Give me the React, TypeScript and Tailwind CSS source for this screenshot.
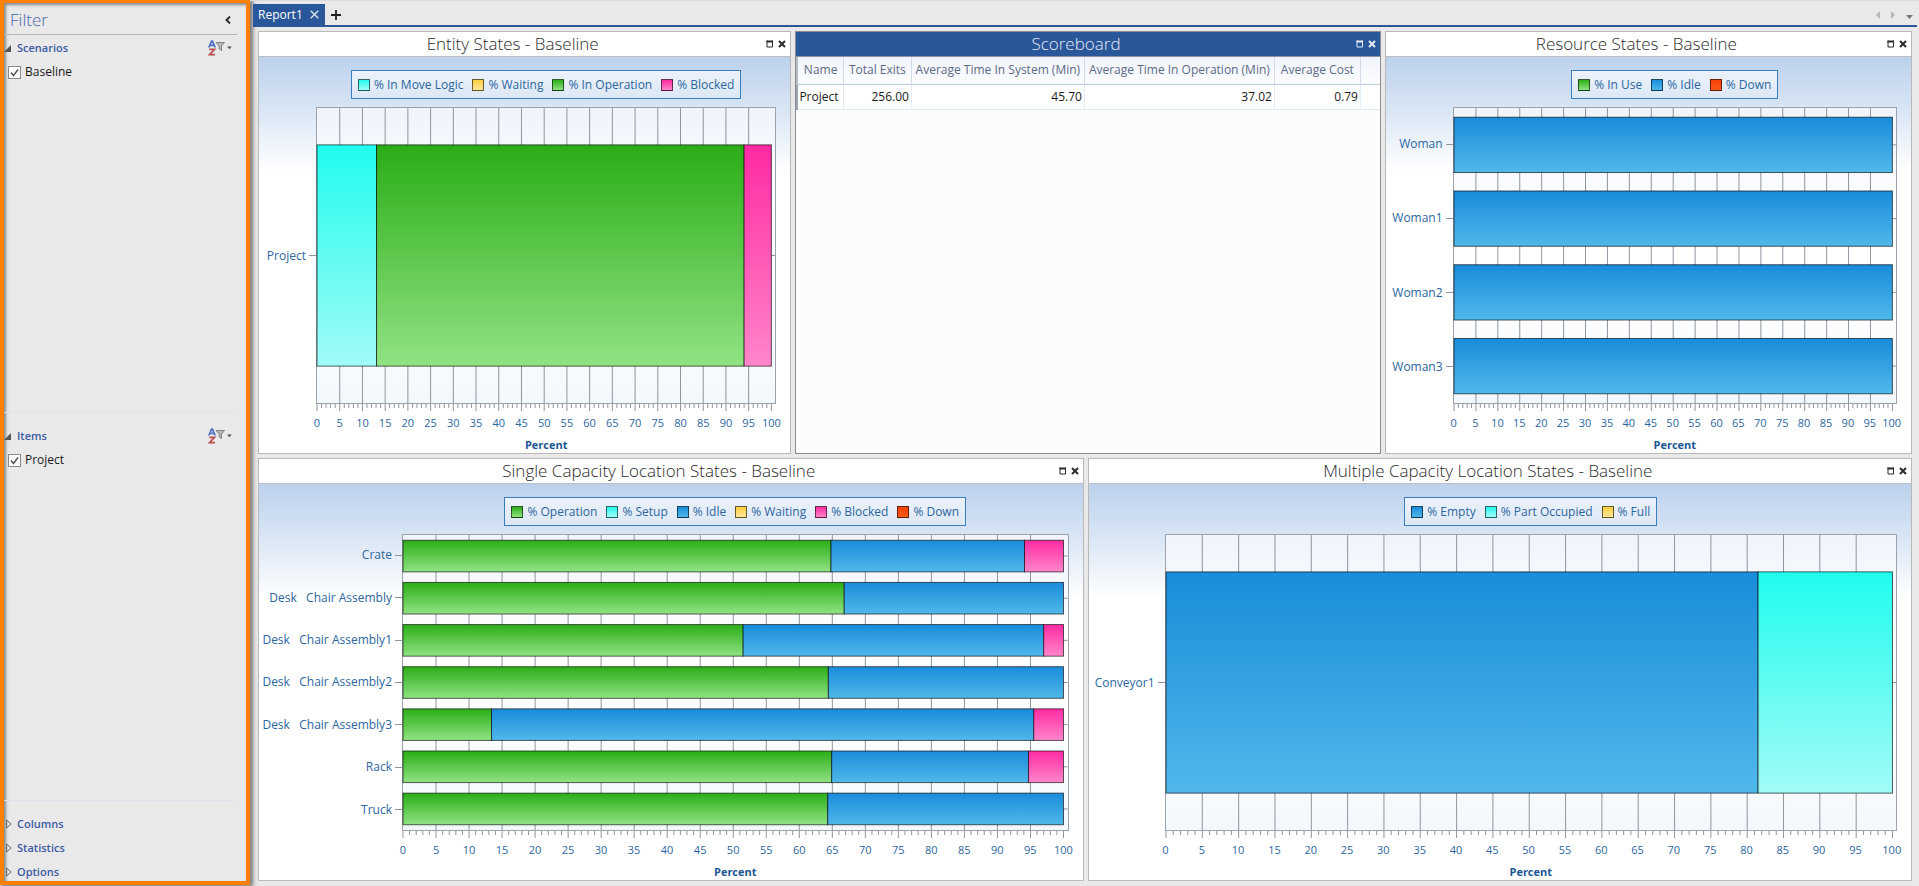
import React from "react";

type Tone = "green" | "blue" | "cyan" | "pink" | "yellow" | "red";

const tones: Record<Tone, [string, string]> = {
  green: ["#2bad17", "#90e383"],
  blue: ["#198cda", "#50b8ea"],
  cyan: ["#20fcee", "#a2fbf7"],
  pink: ["#ff2aa3", "#ff86ca"],
  yellow: ["#fdcf3c", "#ffe699"],
  red: ["#f5430a", "#fc5a17"],
};

interface Row {
  label: string;
  parts: [Tone, number][];
}

interface ChartProps {
  id: string;
  title: string;
  labelWidth: string;
  legend: [Tone, string][];
  rows: Row[];
}

function WindowButtons() {
  return (
    <div className="flex w-6 shrink-0 items-center gap-1">
      <button type="button" aria-label="Maximize" className="flex size-2">
        <svg viewBox="0 0 8 8" className="size-2" fill="none" stroke="currentColor">
          <path d="M1 .5v6.500h5.500v-6.500" />
          <path d="M.5 1.500h6.500" strokeWidth="2" />
        </svg>
      </button>
      <button type="button" aria-label="Close" className="flex size-2">
        <svg viewBox="0 0 8 8" className="size-2" stroke="currentColor" strokeWidth="2">
          <path d="M1 1l6 6M7 1L1 7" />
        </svg>
      </button>
    </div>
  );
}

function Panel({
  title,
  active,
  className,
  children,
}: {
  title: string;
  active?: boolean;
  className: string;
  children: React.ReactNode;
}) {
  return (
    <section
      className={`flex min-w-0 flex-col border ${active ? "border-[#8c8c8c] bg-[#fcfcfc]" : "border-[#b9b9b9] bg-white"} ${className}`}
    >
      <header
        className={`flex h-[25px] shrink-0 items-center border-b ${active ? "border-[#8a93a5] bg-[#2a579a] text-[#e4ebf6]" : "border-[#b9bec8] bg-white text-[#2b2b2b]"}`}
      >
        <h2 className="flex-1 text-center text-[17px] leading-6 font-light">{title}</h2>
        <WindowButtons />
      </header>
      {children}
    </section>
  );
}

function Legend({ items }: { items: [Tone, string][] }) {
  return (
    <ul className="flex h-[29px] items-center gap-[9px] border border-[#3a7fbd] bg-linear-to-b from-[#ecf2fb] to-[#dce8f5] px-[6px] whitespace-nowrap">
      {items.map(([tone, label]) => (
        <li key={label} className="flex items-center gap-1">
          <span
            className="size-3 border border-black/60"
            style={{ backgroundImage: `linear-gradient(${tones[tone][0]}, ${tones[tone][1]})` }}
          />
          {label}
        </li>
      ))}
    </ul>
  );
}

function Plot({ id, rows }: { id: string; rows: Row[] }) {
  const step = 100 / rows.length;
  return (
    <svg className="block size-full overflow-visible" aria-hidden="true">
      <defs>
        {(Object.keys(tones) as Tone[]).map((tone) => (
          <linearGradient key={tone} id={`${id}-${tone}`} x1="0" y1="0" x2="0" y2="1">
            <stop offset="0" stopColor={tones[tone][0]} />
            <stop offset="1" stopColor={tones[tone][1]} />
          </linearGradient>
        ))}
      </defs>
      {Array.from({ length: 19 }, (_, i) => (
        <line key={i} x1={`${(i + 1) * 5}%`} x2={`${(i + 1) * 5}%`} y1="0" y2="100%" stroke="#8f959f" />
      ))}
      {rows.map((row, r) => {
        let start = 0;
        return (
          <g key={row.label}>
            <svg x="100%" y={`${(r + 0.5) * step}%`} overflow="visible">
              <path d="M0 0h4" stroke="#8f959f" />
            </svg>
            {row.parts.map(([tone, end]) => {
              const from = start;
              start = end;
              return (
                <rect
                  key={tone}
                  x={`${from}%`}
                  width={`${end - from}%`}
                  y={`${(r + 0.125) * step}%`}
                  height={`${step * 0.75}%`}
                  fill={`url(#${id}-${tone})`}
                  stroke="#000"
                  strokeOpacity=".62"
                />
              );
            })}
          </g>
        );
      })}
    </svg>
  );
}

function Axis() {
  return (
    <svg className="block h-2 w-full overflow-visible" aria-hidden="true">
      {Array.from({ length: 101 }, (_, i) => (
        <line key={i} x1={`${i}%`} x2={`${i}%`} y1="0" y2={i % 5 ? 4 : 7} stroke="#8f959f" />
      ))}
    </svg>
  );
}

function Chart({ id, title, labelWidth, legend, rows, className }: ChartProps & { className: string }) {
  return (
    <Panel title={title} className={className}>
      <div className="flex flex-1 flex-col bg-[linear-gradient(#bcd1ec,#d5e3f4_46px,#fff_114px)] pt-[13px] pr-[14px] text-xs leading-4 text-[#2c669f]">
        <div className="flex">
          <div className={`shrink-0 ${labelWidth}`} />
          <div className="flex flex-1 justify-center">
            <Legend items={legend} />
          </div>
        </div>
        <div className="mt-2 flex flex-1">
          <div className={`flex shrink-0 flex-col ${labelWidth}`}>
            {rows.map((row) => (
              <div key={row.label} className="flex flex-1 items-center justify-end gap-[3px]">
                <span className="whitespace-pre">{row.label}</span>
                <span className="h-px w-[7px] bg-[#8f959f]" />
              </div>
            ))}
          </div>
          <div className="flex-1 border border-[#9ba2ad] bg-[linear-gradient(#f0f4fb,#fff_40%,#fff_60%,#f3f8fc)] pr-1">
            <Plot id={id} rows={rows} />
          </div>
        </div>
        <div className="flex text-[11px] leading-4">
          <div className={`shrink-0 ${labelWidth}`} />
          <div className="flex-1 px-px">
            <div className="pr-1">
              <Axis />
              <div className="mt-[3px] flex justify-between">
                {Array.from({ length: 21 }, (_, i) => (
                  <span key={i} className="flex w-0 justify-center">
                    {i * 5}
                  </span>
                ))}
              </div>
            </div>
            <p className="mt-[6px] text-center font-bold text-[#1c5796]">Percent</p>
          </div>
        </div>
      </div>
    </Panel>
  );
}

function Scoreboard() {
  const head = "border-r border-[#d3dcea] px-0 text-center font-normal";
  const cell = "border-r border-[#e3edf8] pr-[2px] text-right";
  return (
    <Panel title="Scoreboard" active className="flex-[585]">
      <table className="w-full table-fixed border-collapse text-xs leading-4 whitespace-nowrap">
        <colgroup>
          <col className="w-[46px]" />
          <col className="w-[68px]" />
          <col className="w-[173px]" />
          <col className="w-[190px]" />
          <col className="w-[86px]" />
          <col />
        </colgroup>
        <thead>
          <tr className="h-[27px] border-b border-[#c5cfde] bg-linear-to-b from-[#f0f4fc] to-[#fdfdff] text-[#5b6b86]">
            <th className={`border-l-2 border-l-[#b5bdc9] ${head}`}>Name</th>
            <th className={head}>Total Exits</th>
            <th className={head}>Average Time In System (Min)</th>
            <th className={head}>Average Time In Operation (Min)</th>
            <th className={head}>Average Cost</th>
            <td />
          </tr>
        </thead>
        <tbody>
          <tr className="h-[25px] border-b border-[#dbe9f7] bg-white text-[#1a1a1a]">
            <td className="border-r border-l-2 border-r-[#e3edf8] border-l-[#9ba4b2] pl-px">Project</td>
            <td className={cell}>256.00</td>
            <td className={cell}>45.70</td>
            <td className={cell}>37.02</td>
            <td className={cell}>0.79</td>
            <td />
          </tr>
        </tbody>
      </table>
    </Panel>
  );
}

function SortFilterIcon() {
  return (
    <svg viewBox="0 0 24 16" className="h-4 w-6" aria-hidden="true">
      <g fill="none" strokeWidth="1.700">
        <path d="M.8 7.500L3.600 1h.8L7.200 7.500M2 5.300h4" stroke="#4f71c0" />
        <path d="M1.300 9.300h5.200L1.500 14.700h5.500" stroke="#b5504f" />
      </g>
      <path d="M8 2.500h8.500l-3 3.500v4.500l-2.300-1.500V6z" fill="#b5b5b5" stroke="#7d7d7d" strokeWidth=".9" />
      <path d="M19 6.500h4.800l-2.400 2.700z" fill="#555" />
    </svg>
  );
}

function OpenGroup({ name, option }: { name: string; option: string }) {
  return (
    <section className="flex flex-1 flex-col pb-[11px] text-xs">
      <div className="flex h-6 items-center pr-[5px]">
        <button type="button" className="flex flex-1 items-center gap-[6px] text-[11px] font-semibold text-[#3d5aa5]">
          <svg viewBox="0 0 7 7" className="size-[7px]" aria-hidden="true">
            <path d="M7 0v7H0z" fill="#555" />
          </svg>
          {name}
        </button>
        <button type="button" aria-label={`Sort and filter ${name}`}>
          <SortFilterIcon />
        </button>
      </div>
      <div className="flex-1 border-b border-[#dce4f0]">
        <label className="flex h-6 items-center gap-1 pl-1 text-[#1a1a1a]">
          <span className="grid size-[13px]">
            <input
              type="checkbox"
              defaultChecked
              className="peer col-start-1 row-start-1 size-[13px] appearance-none border border-[#8a8a8a] bg-white"
            />
            <svg
              viewBox="0 0 13 13"
              className="pointer-events-none invisible col-start-1 row-start-1 size-[13px] peer-checked:visible"
              aria-hidden="true"
            >
              <path d="M3 6.500l2.500 3L10 3.500" fill="none" stroke="#555" strokeWidth="1.500" />
            </svg>
          </span>
          {option}
        </label>
      </div>
    </section>
  );
}

function ClosedGroup({ name }: { name: string }) {
  return (
    <button
      type="button"
      className="flex h-6 items-center gap-[5px] pl-[2px] text-[11px] font-semibold text-[#3d5aa5]"
    >
      <svg viewBox="0 0 6 10" className="h-[10px] w-[6px]" aria-hidden="true">
        <path d="M.7 1v8l4.500-4z" fill="none" stroke="#666" />
      </svg>
      {name}
    </button>
  );
}

const entity: ChartProps = {
  id: "entity",
  title: "Entity States - Baseline",
  labelWidth: "w-[57px]",
  legend: [
    ["cyan", "% In Move Logic"],
    ["yellow", "% Waiting"],
    ["green", "% In Operation"],
    ["pink", "% Blocked"],
  ],
  rows: [{ label: "Project", parts: [["cyan", 13.1], ["green", 94], ["pink", 100]] }],
};

const resource: ChartProps = {
  id: "resource",
  title: "Resource States - Baseline",
  labelWidth: "w-[67px]",
  legend: [
    ["green", "% In Use"],
    ["blue", "% Idle"],
    ["red", "% Down"],
  ],
  rows: ["Woman", "Woman1", "Woman2", "Woman3"].map((label) => ({ label, parts: [["blue", 100]] })),
};

const single: ChartProps = {
  id: "single",
  title: "Single Capacity Location States - Baseline",
  labelWidth: "w-[143px]",
  legend: [
    ["green", "% Operation"],
    ["cyan", "% Setup"],
    ["blue", "% Idle"],
    ["yellow", "% Waiting"],
    ["pink", "% Blocked"],
    ["red", "% Down"],
  ],
  rows: [
    { label: "Crate", parts: [["green", 64.8], ["blue", 94.1], ["pink", 100]] },
    { label: "Desk   Chair Assembly", parts: [["green", 66.8], ["blue", 100]] },
    { label: "Desk   Chair Assembly1", parts: [["green", 51.5], ["blue", 97], ["pink", 100]] },
    { label: "Desk   Chair Assembly2", parts: [["green", 64.4], ["blue", 100]] },
    { label: "Desk   Chair Assembly3", parts: [["green", 13.4], ["blue", 95.5], ["pink", 100]] },
    { label: "Rack", parts: [["green", 64.9], ["blue", 94.7], ["pink", 100]] },
    { label: "Truck", parts: [["green", 64.3], ["blue", 100]] },
  ],
};

const multiple: ChartProps = {
  id: "multiple",
  title: "Multiple Capacity Location States - Baseline",
  labelWidth: "w-[76px]",
  legend: [
    ["blue", "% Empty"],
    ["cyan", "% Part Occupied"],
    ["yellow", "% Full"],
  ],
  rows: [{ label: "Conveyor1", parts: [["blue", 81.5], ["cyan", 100]] }],
};

export default function App() {
  return (
    <div className="flex h-screen bg-[#e9e9e9] font-['Open_Sans','Noto_Sans',sans-serif]">
      <aside className="mb-px flex w-[250px] shrink-0 flex-col border-4 border-t-3 border-[#ff8000] shadow-[2px_1px_4px_1px_#777,inset_2px_2px_3px_#888]">
        <div className="mr-[9px] flex h-8 items-center justify-between border-b border-[#b5b5b5] pt-[2px] pr-[6px] pl-[6px]">
          <h1 className="text-[17px] font-light text-[#4a66ae]">Filter</h1>
          <button type="button" aria-label="Collapse filter">
            <svg viewBox="0 0 6 8" className="h-2 w-[6px]" aria-hidden="true">
              <path d="M5 .5L1.500 4 5 7.500" fill="none" stroke="#222" strokeWidth="1.800" />
            </svg>
          </button>
        </div>
        <div className="mt-px mr-[9px] flex flex-1 flex-col">
          <OpenGroup name="Scenarios" option="Baseline" />
          <OpenGroup name="Items" option="Project" />
        </div>
        <div className="-mb-[3px] flex flex-col">
          <ClosedGroup name="Columns" />
          <ClosedGroup name="Statistics" />
          <ClosedGroup name="Options" />
        </div>
      </aside>
      <main className="flex min-w-0 flex-1 flex-col border-t border-[#dcdcdc] pl-[3px]">
        <nav className="mr-[2px] flex h-[26px] items-end justify-between border-b-2 border-[#2a579a] pt-[3px]">
          <div className="flex h-full items-center">
            <div className="flex h-full w-[72px] items-center justify-between bg-[#2a579a] pr-[6px] pl-[5px] text-white">
              <a href="#report1" className="text-xs">
                Report1
              </a>
              <button type="button" aria-label="Close Report1">
                <svg viewBox="0 0 9 9" className="size-[9px]" aria-hidden="true">
                  <path d="M.7.7l7.600 7.600M8.300.7L.7 8.300" stroke="#dfe7f3" strokeWidth="1.300" />
                </svg>
              </button>
            </div>
            <button type="button" aria-label="Add report" className="ml-[6px]">
              <svg viewBox="0 0 10 10" className="size-[10px]" aria-hidden="true">
                <path d="M5 0v10M0 5h10" stroke="#222" strokeWidth="1.800" />
              </svg>
            </button>
          </div>
          <div className="flex h-full items-center gap-[11px] pr-1">
            <button type="button" aria-label="Previous tab">
              <svg viewBox="0 0 4 8" className="h-2 w-1" aria-hidden="true">
                <path d="M4 0v8L0 4z" fill="#b5b5b5" />
              </svg>
            </button>
            <button type="button" aria-label="Next tab">
              <svg viewBox="0 0 4 8" className="h-2 w-1" aria-hidden="true">
                <path d="M0 0v8l4-4z" fill="#b5b5b5" />
              </svg>
            </button>
            <button type="button" aria-label="All tabs" className="pt-1">
              <svg viewBox="0 0 7 4" className="h-1 w-[7px]" aria-hidden="true">
                <path d="M0 0h7L3.500 4z" fill="#777" />
              </svg>
            </button>
          </div>
        </nav>
        <div className="flex flex-1 flex-col gap-1 pt-1 pr-[7px] pb-[5px] pl-[5px]">
          <div className="flex flex-1 gap-1">
            <Chart {...entity} className="flex-[533]" />
            <Scoreboard />
            <Chart {...resource} className="flex-[527]" />
          </div>
          <div className="flex flex-1 gap-1">
            <Chart {...single} className="flex-[825]" />
            <Chart {...multiple} className="flex-[824]" />
          </div>
        </div>
      </main>
    </div>
  );
}
